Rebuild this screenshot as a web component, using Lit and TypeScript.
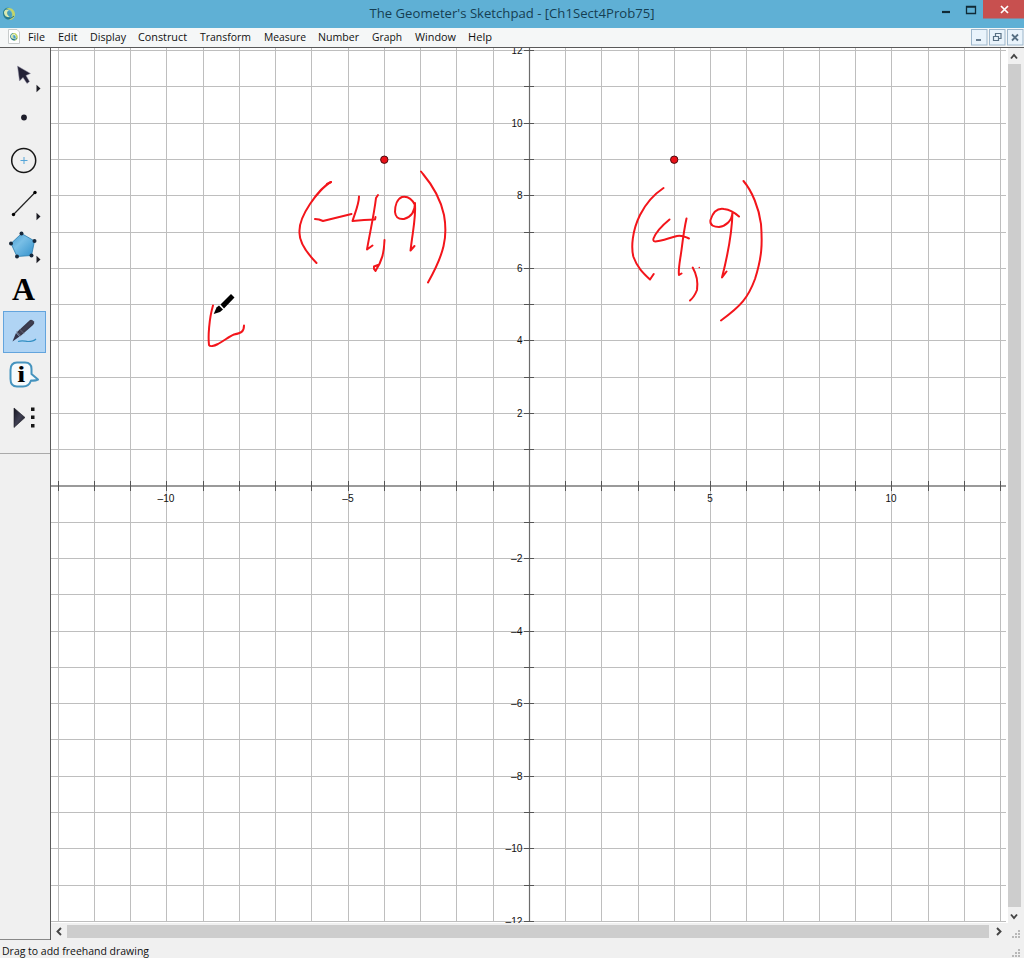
import { LitElement, html, svg, css } from "lit";
import { customElement } from "lit/decorators.js";

const range = (a: number, b: number) => Array.from({ length: b - a + 1 }, (_, i) => a + i);
const px = (n: number) => Math.round(528.9 + n * 36.25) + 0.5;
const py = (n: number) => Math.round(485.5 - n * 36.28) + 0.5;

const MENUS: [string, number][] = [
  ["File", 17], ["Edit", 19.5], ["Display", 36], ["Construct", 49], ["Transform", 51],
  ["Measure", 42], ["Number", 41], ["Graph", 30], ["Window", 41], ["Help", 24],
];

const INK = [
  "M331 182C325 185 316 195 310 204C302 216 299 224 299.5 232C299 241 304 250 316.500 263",
  "M331 182L327 184",
  "M315 219L319 219.500L323 221L351.500 214",
  "M359 196.500C359 204 355 213 352.500 221L364 220L375 219.500L375.500 217",
  "M378 195L376 198C374 215 370 232 367 249.500L372.500 245.500",
  "M384.500 240C384 253 382 261 375.500 271L374 269L374 266.500L378 265",
  "M415 205C412 199 407 196 402 197C397 199 395 206 395 212C395.500 217 399 219.500 404 219C411 217 415 211 415 203C416 218 413 229 410.500 250.500L414.500 246",
  "M421 171.500L423 174C434 187 441 201 444 215C448 237 444 254 428 282.500",
  "M663.500 188C656 193 646 203 640 215C632 231 631 248 633.500 257C637 267 643 273 650 279.500L653.700 274",
  "M669.500 219.500C664 224 656 232 653.500 238.500C651 245 665 239 677 236C683 235 685 237 689 238.500",
  "M686.500 218.500C685 225 683 238 681.500 250C680 261 678 270 679 275L681.500 273.500",
  "M692.700 267.500C697 275 698 283 697 290C695 295 693 298 690 300.500",
  "M739 216.500C733 211 728 209.500 724 209C718 208 713 212 710.500 220C709.500 226 715 227 719 227C726 226 732 221 732.500 212C732 234 727 258 722 277.500L726.500 271.500",
  "M743.500 181C752 191 759 208 761 224C762.500 244 762 257 755 279C748 298 741 306 721 320.500",
  "M213 305.500C209 319 208 337 209 345C210 347 214 346 218 344C225 340 230 336 234 334.500C241 333 244 332 244 325.500",
];

@customElement("sketch-plane")
class SketchPlane extends LitElement {
  static styles = css`
    :host { display: block; overflow: hidden; background: #fff; }
    svg { display: block; }
    .grid { stroke: #bebebe; stroke-width: 1; fill: none; }
    .axis { stroke: #6c6c6c; stroke-width: 1.200; }
    .xaxis { stroke: #9a9a9a; stroke-width: 2; }
    .tick { stroke: #555; stroke-width: 1; }
    .label { font: 11px "Liberation Sans", Arial, sans-serif; fill: #111; }
    .ink { stroke: #f3151b; stroke-width: 2; fill: none; stroke-linecap: round; stroke-linejoin: round; }
    .point { fill: #ea1219; stroke: #4a0d10; stroke-width: 1; }
  `;
  render() {
    const evens = range(-6, 6).map((n) => n * 2).filter((n) => n !== 0);
    return html`<svg width="957" height="875" viewBox="51 48 957 875">
      ${range(-13, 13).map((n) => svg`<path class="grid" d="M${px(n)} 48V922"/>`)}
      ${range(-12, 12).map((n) => svg`<path class="grid" d="M51 ${py(n)}H1006"/>`)}
      <path class="xaxis" d="M51 486H1006"/>
      <path class="axis" d="M529.5 48V922"/>
      ${range(-13, 13).filter((n) => n).map((n) => svg`<path class="tick" d="M${px(n)} 481V491"/>`)}
      ${range(-12, 12).filter((n) => n).map((n) => svg`<path class="tick" d="M524 ${py(n)}H534"/>`)}
      ${evens.map((n) => svg`<text class="label" x="522.500" y=${py(n) + 3.5} text-anchor="end" textLength=${Math.abs(n) > 9 ? (n < 0 ? 17 : 11) : n < 0 ? 11.5 : 5.5} lengthAdjust="spacingAndGlyphs">${n < 0 ? "–" : ""}${Math.abs(n)}</text>`)}
      ${[-10, -5, 5, 10].map((n) => svg`<text class="label" x=${px(n) - 0.5} y="502" text-anchor="middle" textLength=${n === -10 ? 17 : n === 10 ? 11 : n === -5 ? 11.5 : 5.5} lengthAdjust="spacingAndGlyphs">${n < 0 ? "–" : ""}${Math.abs(n)}</text>`)}
      ${INK.map((d) => svg`<path class="ink" d=${d}/>`)}
      <circle cx="699.300" cy="267.500" r=".8" fill="#f3151b"/>
      <circle class="point" cx="384.300" cy="159.700" r="3.700"/>
      <circle class="point" cx="674.200" cy="159.700" r="3.700"/>
      <path d="M213.700 314L216.500 307.500L219 305.500L223 309.500L220 312Z" fill="#000"/>
      <path d="M220.500 304.500L231 294L234.500 297.500L224 308.500Z" fill="#000"/>
    </svg>`;
  }
}

@customElement("app-root")
class AppRoot extends LitElement {
  static styles = css`
    :host {
      display: flex; flex-direction: column; width: 1024px; height: 958px; overflow: hidden;
      background: #f0f0f0; color: #111; font: 12px "Open Sans", "Noto Sans", sans-serif;
    }
    svg { display: block; flex: none; overflow: visible; }
    .title { height: 28px; flex: none; background: #5fb0d5; display: grid; grid-template-columns: 110px 1fr 110px; }
    .menu { height: 20px; flex: none; background: #f5f7f7; display: flex; align-items: center; border-bottom: 1px solid #5a5a5a; box-sizing: border-box; }
    .doc { margin: 0 8px 0 7px; }
    .items { display: flex; gap: 12.650px; flex: 1; }
    .work { flex: 1; min-height: 0; display: grid; grid-template-columns: 50px 1fr; }
    .tools { background: #f0f0f0; border-bottom: 1px solid #888; }
    .view { display: grid; grid-template-columns: 957px 1fr; grid-template-rows: 875px 17px; border-left: 1px solid #5a5a5a; background: #f0f0f0; }
    .status { height: 18px; flex: none; padding-left: 2px; display: flex; justify-content: space-between; }
    .fit { font-family: "Open Sans", "Noto Sans", sans-serif; fill: #111; }
    .titletext { fill: #153e52; }
  `;
  private fit(text: string, width: number, height: number, size: number, baseline: number) {
    return html`<svg width=${width} height=${height}><text class="fit" x="0" y=${baseline} font-size=${size} textLength=${width} lengthAdjust="spacingAndGlyphs">${text}</text></svg>`;
  }
  private swirl() {
    return svg`<path d="M1 6C1 2 5 0 7 1C5 3 5 5 6 8L9 12C4 14 1 10 1 6Z" fill="#287f91"/>
      <path d="M4 2C8-1 13 3 13 7C13 11 10 13 7 13C10 11 11 9 10 6C9 3 7 2 4 2Z" fill="#c4d568"/>
      <path d="M2 5C3 2 5 2 7 3C4 5 5 8 8 10C5 11 2 9 2 5Z" fill="#d9e9b2"/>
      <path d="M6 4C9 4 11 7 9 10C7 10 5 7 6 4Z" fill="#479fbb"/>
      <path d="M4 10Q8 13 12 9" fill="none" stroke="#23728b"/>`;
  }
  private tools() {
    const arrow = (y: number) => svg`<path d="M36.500 ${y - 3.7}L40.500 ${y}L36.500 ${y + 3.7}Z" fill="#1c1c24"/>`;
    return html`<svg width="50" height="891" viewBox="0 48 50 891">
      <defs>
        <linearGradient id="blue" x1="0" y1="0" x2="1" y2="1"><stop offset="0" stop-color="#4298ce"/><stop offset=".4" stop-color="#79bfe6"/><stop offset="1" stop-color="#3190cb"/></linearGradient>
        <linearGradient id="dark" x1="0" y1="0" x2="1" y2="1"><stop offset="0" stop-color="#15151f"/><stop offset=".5" stop-color="#3f3f52"/><stop offset="1" stop-color="#11111a"/></linearGradient>
      </defs>
      <path d="M17.500 66L30.500 73.500L26 75.500L29.500 81.500L27 83.500L23 77.500L19.500 81Z" fill="#242237" stroke="#9997ab" stroke-width=".5"/>
      ${arrow(88.5)}
      <circle cx="24" cy="117.500" r="2.900" fill="#1d1d2a"/>
      <circle cx="23.700" cy="160.500" r="12" fill="none" stroke="#171717" stroke-width="1.500"/>
      <path d="M20.500 160.500H27.500M24 157V164" stroke="#55a5d8"/>
      <path d="M13.500 214.500L35 192.500" stroke="#222" stroke-width="1.200"/>
      <circle cx="13.500" cy="214.500" r="1.700"/><circle cx="35" cy="192.500" r="1.700"/>
      ${arrow(216.5)}
      <path d="M21.500 233.500L34.500 241L31.500 255.500L17 256.500L11 243.500Z" fill="url(#blue)" stroke="#287cad" stroke-width=".8"/>
      ${[[21.5, 233.5], [34.5, 241], [31.5, 255.5], [17, 256.5], [11, 243.5]].map(([x, y]) => svg`<circle cx=${x} cy=${y} r="2" fill="#18283a"/>`)}
      ${arrow(259.5)}
      <text x="23.500" y="299.500" text-anchor="middle" textLength="23" lengthAdjust="spacingAndGlyphs" font-family="Liberation Serif" font-weight="bold" font-size="32">A</text>
      <rect x="3.500" y="311.500" width="42" height="41" fill="#b0d4f4" stroke="#63a4dd"/>
      <path d="M18 341.500C23 340 25 341.500 28 341.500S34 341 36 339" fill="none" stroke="#328fc3" stroke-width="1.200"/>
      <path d="M12.500 341.500L16 333L19.500 336.500Z" fill="#33334a"/>
      <path d="M16.500 332.500L30 320Q32 319 34 321.500Q35 323 33 325L20 336.500Z" fill="url(#dark)"/>
      <path d="M16.500 331.500L21 336M19.500 329L24 333.500" stroke="#777789" stroke-width=".7"/>
      <path d="M17 362.500H25Q31.500 362.500 31.500 369V374L38 379.500Q35 381 31 380.500Q29 386.500 23 386.500H17Q10.500 386.500 10.500 379V370Q10.500 362.500 17 362.500Z" fill="#f6fafc" stroke="#4593be" stroke-width="2" stroke-linejoin="round"/>
      <text x="21.300" y="382" text-anchor="middle" textLength="8" lengthAdjust="spacingAndGlyphs" font-family="Liberation Serif" font-weight="bold" font-size="24">i</text>
      <path d="M14 408L25 417.500L14 427.500Z" fill="url(#dark)" stroke="#1c1c25" stroke-width=".6"/>
      <path d="M31 407.500H34.500V411H31ZM31 415.500H34.500V419H31ZM31 424H34.500V427.500H31Z" fill="#171717"/>
      <path d="M0 453.500H50" stroke="#aaa"/>
    </svg>`;
  }
  private grip(h: number, y: number) {
    return html`<svg width="16" height=${h}>
      ${[[10, 0], [7, 3], [10, 3], [4, 6], [7, 6], [10, 6]].map(([x, dy]) => svg`<rect x=${x} y=${y + dy} width="2" height="2" fill="#b8b8b8"/>`)}
    </svg>`;
  }
  render() {
    return html`
      <div class="title">
        <svg width="110" height="28"><g transform="translate(2 7)">${this.swirl()}</g></svg>
        <svg width="804" height="28"><text class="fit titletext" x="259.500" y="18" font-size="13.500" textLength="285" lengthAdjust="spacingAndGlyphs">The Geometer's Sketchpad - [Ch1Sect4Prob75]</text></svg>
        <svg width="110" height="28">
          <path d="M28 12H36" stroke="#102a36" stroke-width="2.200"/>
          <path d="M52.500 6.500H61.500V13.500H52.500ZM52 7H62" fill="none" stroke="#102a36" stroke-width="1.300"/>
          <rect x="69" y="0" width="41" height="18.500" fill="#c8504f"/>
          <path d="M87 6L94 13M94 6L87 13" stroke="#fff" stroke-width="1.700"/>
        </svg>
      </div>
      <div class="menu">
        <svg class="doc" width="13" height="19"><path d="M1.500 1.500H10L12.500 4V15.500H1.500Z" fill="#fff" stroke="#c8cccc"/><g transform="translate(2.500 4.500) scale(.64)">${this.swirl()}</g></svg>
        <div class="items">${MENUS.map(([t, w]) => this.fit(t, w, 19, 11.5, 13))}</div>
        <svg width="54" height="19">
          ${[1.5, 19.5, 37.5].map((x) => svg`<rect x=${x} y="1.500" width="15.500" height="15.500" fill="#e9f3fb" stroke="#9db6cb"/>`)}
          <path d="M6 12H11" stroke="#587084" stroke-width="1.800"/>
          <path d="M25.500 8V5.500H31V10.500H29M23.500 8.500H28.500V12.500H23.500Z" fill="none" stroke="#587084" stroke-width="1.200"/>
          <path d="M42 6.500L48 12.500M48 6.500L42 12.500" stroke="#587084" stroke-width="1.800"/>
        </svg>
      </div>
      <div class="work">
        <div class="tools">${this.tools()}</div>
        <div class="view">
          <sketch-plane></sketch-plane>
          <svg width="16" height="875">
            <rect x="0" y="16" width="13" height="843" fill="#cdcdcd"/>
            <path d="M3 10.500L6 7L9 10.500M3 866.500L6 870L9 866.500" fill="none" stroke="#444" stroke-width="1.900"/>
          </svg>
          <svg width="957" height="17">
            <rect x="16" y="2" width="922" height="13" fill="#cdcdcd"/>
            <path d="M10 5L6.500 8.500L10 12M946 5L949.500 8.500L946 12" fill="none" stroke="#444" stroke-width="1.900"/>
          </svg>
          ${this.grip(17, 7)}
        </div>
      </div>
      <div class="status">${this.fit("Drag to add freehand drawing", 147, 18, 11.5, 15)}${this.grip(18, 9)}</div>
    `;
  }
}
